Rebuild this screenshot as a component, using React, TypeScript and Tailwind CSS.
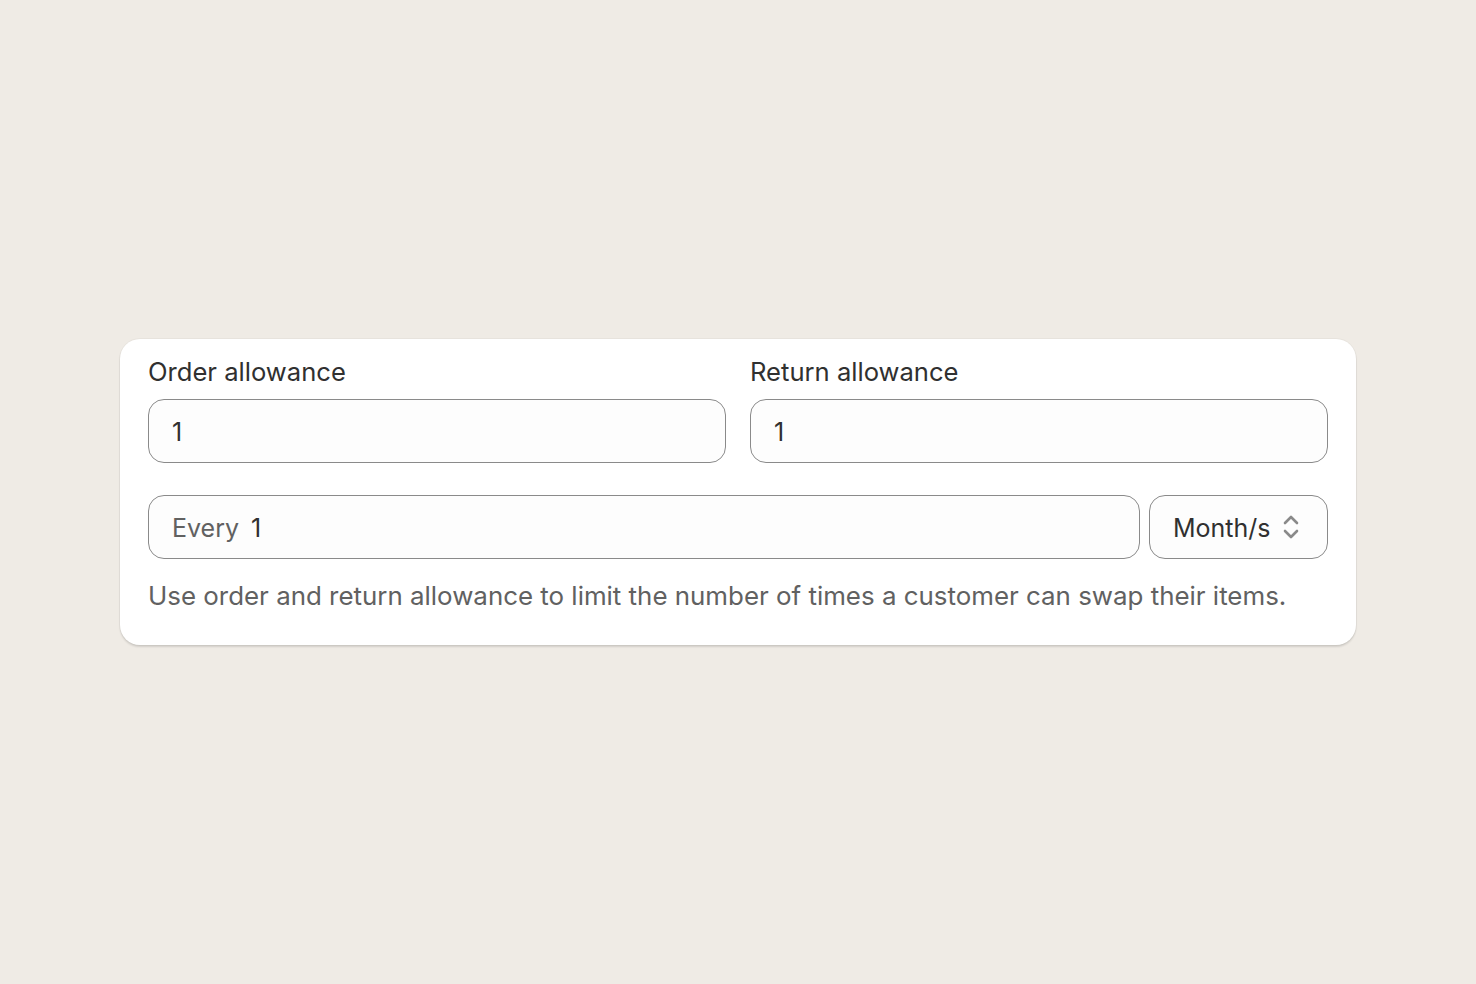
import React from "react";

export default function App() {
  return (
    <div className="w-[1476px] h-[984px] bg-[#efebe5] flex items-start justify-center pt-[339px]" style={{ fontFamily: "Inter, 'Noto Sans', sans-serif" }}>
      <div className="w-[1236px] bg-white rounded-[20px] shadow-[0_2px_2px_rgba(0,0,0,0.12),0_0_0_1px_rgba(0,0,0,0.03)] px-[28px] pt-[17px] pb-[33px]">
        <div className="grid grid-cols-2 gap-x-[24px]">
          <div>
            <div className="text-[25.6px] leading-[32px] text-[#303030]">Order allowance</div>
            <div className="mt-[11px] h-[64px] rounded-[16px] border border-[#8a8a8a] bg-[#fdfdfd] flex items-center px-[23px] pt-[4px] text-[25px] text-[#303030]">1</div>
          </div>
          <div>
            <div className="text-[25.6px] leading-[32px] text-[#303030]">Return allowance</div>
            <div className="mt-[11px] h-[64px] rounded-[16px] border border-[#8a8a8a] bg-[#fdfdfd] flex items-center px-[23px] pt-[4px] text-[25px] text-[#303030]">1</div>
          </div>
        </div>
        <div className="mt-[32px] flex gap-[9px]">
          <div className="flex-1 h-[64px] rounded-[16px] border border-[#8a8a8a] bg-[#fdfdfd] flex items-center px-[23px] pt-[4px] text-[25px]">
            <span className="text-[#616161]">Every</span>
            <span className="ml-[12px] text-[#303030]">1</span>
          </div>
          <div className="w-[179px] h-[64px] rounded-[16px] border border-[#8a8a8a] bg-[#fdfdfd] flex items-center pl-[23px] pr-[26px] justify-between text-[25px] text-[#303030]">
            <span className="pt-[4px]">Month/s</span>
            <svg width="20" height="28" viewBox="0 0 20 28" fill="none" stroke="#8a8a8a" strokeWidth="2.6" strokeLinecap="round" strokeLinejoin="round">
              <path d="M4 10 L10 4 L16 10" />
              <path d="M4 18 L10 24 L16 18" />
            </svg>
          </div>
        </div>
        <div className="mt-[21px] text-[25.9px] leading-[32px] text-[#616161]">
          Use order and return allowance to limit the number of times a customer can swap their items.
        </div>
      </div>
    </div>
  );
}
